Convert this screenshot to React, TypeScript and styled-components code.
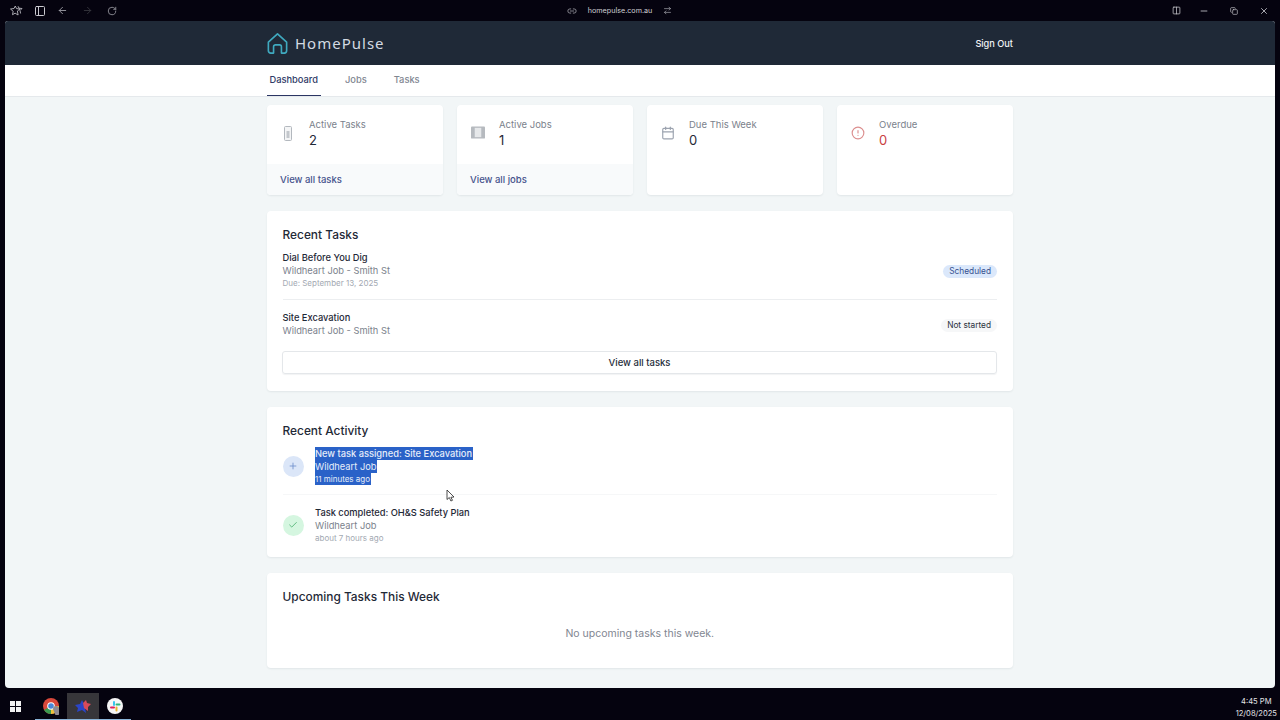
import React from 'react';
import styled, { createGlobalStyle } from 'styled-components';
import { ArrowLeft, ArrowRight, RotateCw, PanelLeft, Columns2, Minus, X, Plus, Check, Calendar, CircleAlert, ArrowRightLeft, Copy, Link2 } from 'lucide-react';

const GlobalStyle = createGlobalStyle`
  html, body {
    margin: 0;
    padding: 0;
    height: 720px;
    overflow: hidden;
    background: #05030f;
    font-family: Inter, "Liberation Sans", sans-serif;
  }
  * { box-sizing: border-box; }
`;

const Screen = styled.div`
  width: 1280px;
  height: 720px;
  display: flex;
  flex-direction: column;
  background: #05030f;
`;

const TitleBar = styled.div`
  height: 21px;
  display: grid;
  grid-template-columns: 1fr auto 1fr;
  align-items: center;
  padding: 0 1px 0 10px;
  color: #c9c9cf;
`;

const TitleLeft = styled.div`
  display: flex;
  align-items: center;
  gap: 11px;
`;

const TitleCenter = styled.div`
  display: flex;
  align-items: center;
  gap: 11px;
  margin-right: 50px;
  font-size: 7.2px;
  color: #d0d0d4;
`;

const TitleRight = styled.div`
  display: flex;
  justify-content: flex-end;
  align-items: center;
`;

const WinSlot = styled.span<{ $narrow?: boolean }>`
  width: ${p => (p.$narrow ? 26 : 30)}px;
  display: flex;
  justify-content: center;
`;

const Dim = styled.span<{ $faint?: boolean; $shift?: boolean }>`
  display: inline-flex;
  margin-left: ${p => (p.$shift ? 3 : 0)}px;
  color: ${p => (p.$faint ? '#34343c' : '#9a9aa2')};
`;

const AppWindow = styled.div`
  flex: none;
  height: 667px;
  margin: 0 5px;
  border-radius: 3px 3px 4px 4px;
  overflow: hidden;
  background: #f2f6f7;
  display: flex;
  flex-direction: column;
`;

const Header = styled.header`
  height: 44px;
  background: #1f2937;
  padding: 0 262px;
  display: flex;
  align-items: center;
  justify-content: space-between;
`;

const Brand = styled.div`
  display: flex;
  align-items: center;
  gap: 7px;
`;

const BrandName = styled.span`
  font-family: "Noto Sans", Lato, sans-serif;
  font-size: 15px;
  letter-spacing: 1px;
  color: #d3dae2;
`;

const SignOut = styled.span`
  font-size: 9.2px;
  font-weight: 500;
  color: #f1f3f5;
`;

const Nav = styled.nav`
  height: 32px;
  background: #fff;
  border-bottom: 1px solid #e5e9ec;
  padding: 0 262px;
  display: flex;
  gap: 22px;
`;

const NavItem = styled.span<{ $active?: boolean }>`
  height: 31px;
  padding: 0 2.5px 1px;
  display: flex;
  align-items: center;
  font-size: 9.3px;
  font-weight: 500;
  color: ${p => (p.$active ? '#2f3a66' : '#7f8691')};
  border-bottom: 1px solid ${p => (p.$active ? '#2b3563' : 'transparent')};
`;

const Main = styled.main`
  width: 746px;
  margin: 8px auto 0;
  display: flex;
  flex-direction: column;
  gap: 16px;
`;

const StatGrid = styled.div`
  display: grid;
  grid-template-columns: repeat(4, 176px);
  gap: 14px;
`;

const StatCard = styled.div`
  height: 90px;
  background: #fff;
  border-radius: 4px;
  box-shadow: 0 1px 2px rgba(30, 50, 70, 0.08);
  overflow: hidden;
  display: flex;
  flex-direction: column;
`;

const StatBody = styled.div`
  flex: 1;
  padding: 13px 13px 0 14px;
  display: flex;
  gap: 14px;
`;

const StatIcon = styled.div<{ $danger?: boolean }>`
  width: 14px;
  display: flex;
  justify-content: center;
  padding-top: 8px;
  color: ${p => (p.$danger ? '#dc8f8f' : '#9ca3af')};
`;

const StatLabel = styled.div`
  font-size: 9.5px;
  line-height: 13px;
  color: #7b828c;
`;

const StatValue = styled.div<{ $danger?: boolean }>`
  font-size: 13px;
  line-height: 18px;
  color: ${p => (p.$danger ? '#c9403f' : '#1f2937')};
`;

const StatFooter = styled.div`
  height: 31px;
  padding: 0 13px;
  background: #f8fafb;
  display: flex;
  align-items: center;
  font-size: 9.5px;
  font-weight: 500;
  color: #46528c;
`;

const Card = styled.section<{ $height: number }>`
  height: ${p => p.$height}px;
  background: #fff;
  border-radius: 4px;
  box-shadow: 0 1px 2px rgba(30, 50, 70, 0.08);
  padding: 16px 16px 0 15.5px;
`;

const CardTitle = styled.h2`
  margin: 0 0 1px;
  font-size: 11.9px;
  line-height: 15px;
  font-weight: 500;
  color: #1f2937;
`;

const TaskRow = styled.div<{ $height: number; $line?: boolean }>`
  height: ${p => p.$height}px;
  display: flex;
  justify-content: space-between;
  align-items: center;
  border-bottom: ${p => (p.$line ? '1px solid #eceef0' : 'none')};
`;

const TaskText = styled.div`
  padding-bottom: 3px;
`;

const ItemTitle = styled.div`
  font-size: 9.3px;
  line-height: 13px;
  font-weight: 500;
  color: #1f2937;
`;

const ItemSub = styled.div`
  font-size: 9.3px;
  line-height: 13px;
  color: #7b828c;
`;

const ItemMeta = styled.div`
  font-size: 8px;
  line-height: 12px;
  color: #a3a9b2;
`;

const Badge = styled.span<{ $tone: 'blue' | 'gray' }>`
  height: 13px;
  padding: 0 6px;
  border-radius: 7px;
  display: flex;
  align-items: center;
  font-size: 8.3px;
  color: ${p => (p.$tone === 'blue' ? '#36508f' : '#2b3340')};
  background: ${p => (p.$tone === 'blue' ? '#dbe8fb' : '#f6f7f8')};
`;

const WideButton = styled.div`
  height: 23px;
  margin: 1px 0 0 -0.5px;
  border: 1px solid #e4e7ea;
  border-radius: 3px;
  box-shadow: 0 1px 1px rgba(30, 50, 70, 0.06);
  display: flex;
  align-items: center;
  justify-content: center;
  font-size: 9.5px;
  font-weight: 500;
  color: #252d3a;
`;

const ActivityRow = styled.div<{ $first?: boolean }>`
  padding: ${p => (p.$first ? '8px 0 9px' : '11px 0 0')};
  display: flex;
  align-items: center;
  gap: 11.5px;
  border-bottom: ${p => (p.$first ? '1px solid #f6f7f8' : 'none')};
`;

const ActivityDot = styled.div<{ $tone: 'blue' | 'green' }>`
  width: 21px;
  height: 21px;
  border-radius: 50%;
  display: flex;
  align-items: center;
  justify-content: center;
  background: ${p => (p.$tone === 'blue' ? '#dbe6f8' : '#d5f6e0')};
  color: ${p => (p.$tone === 'blue' ? '#6d8ecb' : '#49b06f')};
`;

const ActivityText = styled.div`
  display: flex;
  flex-direction: column;
  align-items: flex-start;
`;

const Marked = styled.span`
  display: inline-block;
  padding-right: 1px;
  background: #2a62c8;
  color: #e6edf9;
`;

const EmptyNote = styled.div`
  margin-top: 23px;
  text-align: center;
  font-size: 10.5px;
  color: #7f8691;
`;

const Cursor = styled.svg`
  position: absolute;
  left: 446px;
  top: 489px;
`;

const Taskbar = styled.footer`
  flex: 1;
  padding: 0 3px 0 10px;
  display: flex;
  align-items: flex-end;
`;

const StartGrid = styled.div`
  width: 11px;
  height: 11px;
  margin: 0 14px 8px 0;
  display: grid;
  grid-template-columns: 1fr 1fr;
  gap: 1px;
  & > i { background: #f2f2f2; }
`;

const TaskApp = styled.div<{ $active?: boolean }>`
  width: 32px;
  height: 27px;
  display: flex;
  align-items: center;
  justify-content: center;
  background: ${p => (p.$active ? '#37363a' : 'transparent')};
  border-bottom: 1px solid #8ab4d8;
`;

const Clock = styled.div`
  margin-left: auto;
  text-align: center;
  font-size: 7.6px;
  line-height: 12px;
  color: #e2e2e6;
`;

const RecentTasks = [
  { title: 'Dial Before You Dig', sub: 'Wildheart Job - Smith St', due: 'Due: September 13, 2025', status: 'Scheduled', tone: 'blue' as const },
  { title: 'Site Excavation', sub: 'Wildheart Job - Smith St', status: 'Not started', tone: 'gray' as const },
];

const Logo = () => (
  <svg width="21" height="23" viewBox="0 0 23 24" fill="none" stroke="#3fa9bf" strokeWidth="1.8" strokeLinejoin="round">
    <path d="M1.5 10.5 11.5 1.5l10 9v9.5a2.5 2.5 0 0 1-2.5 2.5h-3.2v-7a2 2 0 0 0-2-2H9.2a2 2 0 0 0-2 2v7H4a2.5 2.5 0 0 1-2.5-2.5z" />
  </svg>
);

const BrowserMark = () => (
  <svg width="13" height="11" viewBox="0 0 13 11" fill="none" stroke="#b9b9c0" strokeWidth="0.9" strokeLinejoin="round">
    <path d="M.5 4 4 3.5 5.3 1l1.2 2.6L10 4 7.4 6l.7 4-3-1.8-2.6 1.5.7-3.4z" />
    <path d="M8 1.2l1 2 3 .3-2 2 .6 3" />
  </svg>
);

const StarApp = () => (
  <svg width="18" height="14" viewBox="0 0 18 14">
    <path d="M1 6 6 5 8 1l2 4 5 .5L11 9l1 5-4-3-5 2 1-4z" fill="#2a45c8" />
    <path d="M9 4l3-3 1 3 4 1-3 3 0 4-4-3z" fill="#d84a5a" />
  </svg>
);

const TasksGlyph = () => (
  <svg width="8" height="15" viewBox="0 0 8 15">
    <rect x="0.5" y="0.5" width="7" height="14" rx="1" fill="#f4f5f6" stroke="#b3b8be" />
    <rect x="2.5" y="5" width="3" height="7" fill="#c3c7cc" />
  </svg>
);

const JobsGlyph = () => (
  <svg width="15" height="13" viewBox="0 0 15 13">
    <rect x="0" y="0" width="15" height="13" rx="1" fill="#b6babf" />
    <rect x="4" y="1.5" width="7" height="10" fill="#e6e8ea" />
  </svg>
);

const Chrome = () => (
  <svg width="17" height="17" viewBox="0 0 17 17">
    <circle cx="8" cy="8" r="8" fill="#d9483b" />
    <path d="M8 8 1.1 12A8 8 0 0 0 8 16l4-8z" fill="#3b9a4f" />
    <path d="M8 8h8a8 8 0 0 1-8 8L8 8z" fill="#eec23c" />
    <circle cx="8" cy="8" r="3.8" fill="#fff" />
    <circle cx="8" cy="8" r="2.8" fill="#4a86d8" />
    <path d="M10 11a3 3 0 0 1 6 0v4a2 2 0 0 1-4 1z" fill="#8d8a92" />
  </svg>
);

const Slack = () => (
  <svg width="16" height="16" viewBox="0 0 16 16">
    <circle cx="8" cy="8" r="8" fill="#f5f5f5" />
    <rect x="6" y="3" width="2" height="5" rx="1" fill="#36c5f0" />
    <rect x="3" y="8.5" width="5" height="2" rx="1" fill="#e01e5a" />
    <rect x="8.5" y="5.5" width="5" height="2" rx="1" fill="#2eb67d" />
    <rect x="8.5" y="8.5" width="2" height="5" rx="1" fill="#ecb22e" />
  </svg>
);

export default function App() {
  return (
    <Screen>
      <GlobalStyle />
      <TitleBar>
        <TitleLeft>
          <BrowserMark />
          <PanelLeft size={12} />
          <Dim><ArrowLeft size={11} /></Dim>
          <Dim $faint $shift><ArrowRight size={11} /></Dim>
          <Dim $shift><RotateCw size={10} /></Dim>
        </TitleLeft>
        <TitleCenter>
          <Dim><Link2 size={10} /></Dim>
          homepulse.com.au
          <Dim><ArrowRightLeft size={9} /></Dim>
        </TitleCenter>
        <TitleRight>
          <WinSlot $narrow><Columns2 size={9} /></WinSlot>
          <WinSlot><Minus size={10} /></WinSlot>
          <WinSlot><Copy size={8} /></WinSlot>
          <WinSlot><X size={10} /></WinSlot>
        </TitleRight>
      </TitleBar>

      <AppWindow>
        <Header>
          <Brand>
            <Logo />
            <BrandName>HomePulse</BrandName>
          </Brand>
          <SignOut>Sign Out</SignOut>
        </Header>
        <Nav>
          <NavItem $active>Dashboard</NavItem>
          <NavItem>Jobs</NavItem>
          <NavItem>Tasks</NavItem>
        </Nav>
        <Main>
          <StatGrid>
            <StatCard>
              <StatBody>
                <StatIcon><TasksGlyph /></StatIcon>
                <div><StatLabel>Active Tasks</StatLabel><StatValue>2</StatValue></div>
              </StatBody>
              <StatFooter>View all tasks</StatFooter>
            </StatCard>
            <StatCard>
              <StatBody>
                <StatIcon><JobsGlyph /></StatIcon>
                <div><StatLabel>Active Jobs</StatLabel><StatValue>1</StatValue></div>
              </StatBody>
              <StatFooter>View all jobs</StatFooter>
            </StatCard>
            <StatCard>
              <StatBody>
                <StatIcon><Calendar size={14} /></StatIcon>
                <div><StatLabel>Due This Week</StatLabel><StatValue>0</StatValue></div>
              </StatBody>
            </StatCard>
            <StatCard>
              <StatBody>
                <StatIcon $danger><CircleAlert size={14} /></StatIcon>
                <div><StatLabel>Overdue</StatLabel><StatValue $danger>0</StatValue></div>
              </StatBody>
            </StatCard>
          </StatGrid>

          <Card $height={180}>
            <CardTitle>Recent Tasks</CardTitle>
            <TaskRow $height={57} $line>
              <TaskText>
                <ItemTitle>{RecentTasks[0].title}</ItemTitle>
                <ItemSub>{RecentTasks[0].sub}</ItemSub>
                <ItemMeta>{RecentTasks[0].due}</ItemMeta>
              </TaskText>
              <Badge $tone={RecentTasks[0].tone}>{RecentTasks[0].status}</Badge>
            </TaskRow>
            <TaskRow $height={50}>
              <TaskText>
                <ItemTitle>{RecentTasks[1].title}</ItemTitle>
                <ItemSub>{RecentTasks[1].sub}</ItemSub>
              </TaskText>
              <Badge $tone={RecentTasks[1].tone}>{RecentTasks[1].status}</Badge>
            </TaskRow>
            <WideButton>View all tasks</WideButton>
          </Card>

          <Card $height={150}>
            <CardTitle>Recent Activity</CardTitle>
            <ActivityRow $first>
              <ActivityDot $tone="blue"><Plus size={10} /></ActivityDot>
              <ActivityText>
                <ItemTitle><Marked>New task assigned: Site Excavation</Marked></ItemTitle>
                <ItemSub><Marked>Wildheart Job</Marked></ItemSub>
                <ItemMeta><Marked>11 minutes ago</Marked></ItemMeta>
              </ActivityText>
            </ActivityRow>
            <ActivityRow>
              <ActivityDot $tone="green"><Check size={10} /></ActivityDot>
              <ActivityText>
                <ItemTitle>Task completed: OH&amp;S Safety Plan</ItemTitle>
                <ItemSub>Wildheart Job</ItemSub>
                <ItemMeta>about 7 hours ago</ItemMeta>
              </ActivityText>
            </ActivityRow>
          </Card>

          <Card $height={95}>
            <CardTitle>Upcoming Tasks This Week</CardTitle>
            <EmptyNote>No upcoming tasks this week.</EmptyNote>
          </Card>
        </Main>
      </AppWindow>

      <Taskbar>
        <StartGrid><i /><i /><i /><i /></StartGrid>
        <TaskApp><Chrome /></TaskApp>
        <TaskApp $active><StarApp /></TaskApp>
        <TaskApp><Slack /></TaskApp>
        <Clock>4:45 PM<br />12/08/2025</Clock>
      </Taskbar>

      <Cursor width="9" height="13" viewBox="0 0 9 13">
        <path d="M1 1v9.5l2.3-2 1.6 3.5 1.6-.7L4.9 8.3 8 8z" fill="#fff" stroke="#222" strokeWidth="0.8" />
      </Cursor>
    </Screen>
  );
}
